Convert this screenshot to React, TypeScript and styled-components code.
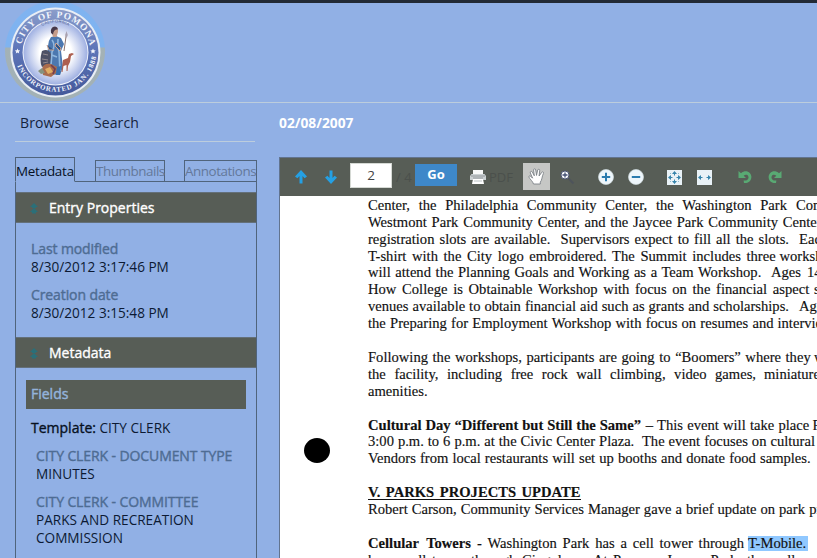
import React from "react";
import styled, { createGlobalStyle } from "styled-components";

const Global = createGlobalStyle`
  * { box-sizing: border-box; }
  html, body { margin: 0; padding: 0; overflow: hidden; background: #91b0e5; }
  body { font-family: "Open Sans", "Noto Sans", sans-serif; font-size: 14px; color: #0c1a33; }
`;

const Page = styled.div`
  width: 817px;
  height: 558px;
  overflow: hidden;
  background: #91b0e5;
`;

const Header = styled.header`
  height: 103px;
  border-top: 3px solid #222a35;
  border-bottom: 1px solid #bccddd;
  padding-left: 4px;
`;

const Columns = styled.div`
  display: flex;
  height: 455px;
`;

const Sidebar = styled.aside`
  width: 242px;
  margin-left: 15px;
  display: flex;
  flex-direction: column;
`;

const Nav = styled.nav`
  display: flex;
  gap: 24px;
  height: 39px;
  padding: 9px 0 0 5px;
  margin-right: 2px;
  line-height: 22px;
  border-bottom: 1px solid #bccddd;
  color: #14233d;
`;

const NavLink = styled.span<{ $w: number }>`
  width: ${(p) => p.$w}px;
  letter-spacing: 0.1px;
  white-space: nowrap;
`;

const Tabs = styled.div`
  display: flex;
  align-items: flex-end;
  height: 25px;
  margin-top: 15px;
`;

const Tab = styled.div<{ $w: number; $active?: boolean }>`
  width: ${(p) => p.$w}px;
  height: ${(p) => (p.$active ? 25 : 22)}px;
  border: 1px solid #50647c;
  border-bottom-color: ${(p) => (p.$active ? "transparent" : "#50647c")};
  color: ${(p) => (p.$active ? "#06101f" : "#64789a")};
  font-size: 13.4px;
  letter-spacing: ${(p) => (p.$active ? -0.22 : -0.44)}px;
  line-height: ${(p) => (p.$active ? 27 : 21)}px;
  white-space: nowrap;
`;

const TabGap = styled.div<{ $w: number }>`
  width: ${(p) => p.$w}px;
  border-bottom: 1px solid #50647c;
`;

const Panel = styled.div`
  flex: 1;
  padding-top: 10px;
  border-left: 1px solid #50647c;
  border-right: 1px solid #50647c;
`;

const SectionBar = styled.div`
  display: flex;
  align-items: center;
  height: 31px;
  padding-left: 12px;
  gap: 9px;
  background: #575d56;
  border-top: 1px solid #64707a;
  border-bottom: 1px solid #64707a;
  color: #fff;
  -webkit-text-stroke: 0.35px #fff;
`;

const Properties = styled.dl`
  height: 114px;
  margin: 0;
  padding: 17px 0 0 15px;
  line-height: 18px;
`;

const Label = styled.dt`
  color: #4e6c93;
  letter-spacing: -0.1px;
  -webkit-text-stroke: 0.4px #4e6c93;
  white-space: nowrap;
`;

const Value = styled.dd`
  margin: 0 0 10px;
  max-width: 190px;
  font-size: 13.6px;
`;

const FieldsBar = styled.div`
  height: 29px;
  margin: 12px 10px 0;
  padding-left: 5px;
  line-height: 28px;
  background: #575d56;
  color: #93b2da;
  -webkit-text-stroke: 0.45px #93b2da;
`;

const Template = styled.div`
  margin: 10px 0 10px 15px;
  line-height: 18px;
  font-size: 13.6px;
  b { font-weight: 400; font-size: 14px; color: #07101e; -webkit-text-stroke: 0.35px #07101e; }
`;

const Fields = styled.dl`
  margin: 0;
  padding-left: 20px;
  line-height: 18px;
`;

const Viewer = styled.main`
  width: 538px;
  margin-left: 22px;
  display: flex;
  flex-direction: column;
`;

const Title = styled.h1`
  height: 54px;
  margin: 0;
  padding-top: 10px;
  color: #fff;
  font-size: 13.8px;
  line-height: 20px;
  font-weight: 700;
`;

const Toolbar = styled.div`
  display: flex;
  align-items: center;
  height: 39px;
  background: #575d56;
  border-top: 1px solid #62748f;
  border-left: 1px solid #62748f;
`;

const Slot = styled.div<{ $ml: number; $w: number }>`
  flex: none;
  width: ${(p) => p.$w}px;
  margin-left: ${(p) => p.$ml}px;
  line-height: 18px;
  white-space: nowrap;
  svg { display: block; }
`;

const Dim = styled(Slot)`
  color: #4b504c;
  font-size: 13px;
`;

const PageInput = styled.div`
  flex: none;
  width: 42px;
  height: 25px;
  margin-left: 13px;
  margin-top: -3px;
  background: #fff;
  border: 1px solid #d5d9d4;
  color: #444;
  text-align: center;
  font-size: 13.5px;
  line-height: 22px;
`;

const GoButton = styled.div`
  flex: none;
  width: 42px;
  height: 22px;
  margin-left: 7px;
  margin-top: -4px;
  background: #3e88c9;
  color: #fff;
  text-align: center;
  font-size: 13px;
  font-weight: 700;
  line-height: 21px;
`;

const HandButton = styled.div`
  flex: none;
  width: 27px;
  height: 27px;
  margin-left: 12px;
  margin-top: -1px;
  padding: 5px;
  background: #c6c7c5;
  svg { display: block; }
`;

const Paper = styled.div`
  flex: 1;
  display: flex;
  overflow: hidden;
  background: #fff;
  border-left: 1px solid #62748f;
`;

const Margin = styled.div`
  flex: none;
  width: 88px;
  padding: 242px 0 0 24px;
`;

const PunchHole = styled.div`
  width: 26px;
  height: 25px;
  border-radius: 50%;
  background: #000;
`;

const Text = styled.div`
  flex: 1;
  min-width: 0;
  padding-top: 0.8px;
  font-family: "Liberation Serif", serif;
  font-size: 14.6px;
  color: #111;
  -webkit-text-stroke: 0.15px #111;
`;

const Line = styled.div`
  height: 16.92px;
  line-height: 17px;
  display: flex;
  white-space: nowrap;
`;

const Run = styled.span<{ $w: number; $gap: number; $bold?: boolean; $mark?: boolean; $under?: boolean }>`
  flex: none;
  width: ${(p) => p.$w}px;
  margin-left: ${(p) => p.$gap}px;
  word-spacing: -1.5px;
  text-align: justify;
  text-align-last: justify;
  font-weight: ${(p) => (p.$bold ? 700 : 400)};
  height: ${(p) => (p.$under ? "16px" : p.$mark ? "15px" : "auto")};
  margin-top: ${(p) => (p.$mark ? "1px" : "0")};
  line-height: ${(p) => (p.$mark ? "15px" : "17px")};
  background: ${(p) => (p.$mark ? "#90c8ff" : "transparent")};
  border-bottom: ${(p) => (p.$under ? "1px solid #111" : "none")};
`;

type R = { t: string; from: number; to: number; bold?: boolean; mark?: boolean; under?: boolean };
const left = 368;
const r = (t: string, from: number, to: number, extra: Partial<R> = {}): R => ({ t, from, to, ...extra });

const lines: R[][] = [
  [r("Center, the Philadelphia Community Center, the Washington Park", 368, 787), r("Community", 796, 870)],
  [r("Westmont Park Community Center, and the Jaycee Park Community", 368, 778), r("Center.", 782.7, 826)],
  [r("registration slots are available.\u00a0 Supervisors expect to fill all the slots.", 368, 789), r("Each", 799, 830)],
  [r("T-shirt with the City logo embroidered. The Summit includes three", 368, 775.7), r("workshops", 779.5, 845)],
  [r("will attend the Planning Goals and Working as a Team Workshop.", 368, 761.3), r("Ages 14", 771, 821.5)],
  [r("How College is Obtainable Workshop with focus on the financial aspect", 368, 809.3), r("such", 814, 842)],
  [r("venues available to obtain financial aid such as grants and scholarships.", 368, 789), r("Ages", 799, 830)],
  [r("the Preparing for Employment Workshop with focus on resumes and", 368, 773.5), r("interviews", 777.5, 840)],
  [],
  [r("Following the workshops, participants are going to “Boomers” where they", 368, 810.7), r("will", 814, 840)],
  [r("the facility, including free rock wall climbing, video games,", 368, 756), r("miniature", 764, 820)],
  [r("amenities.", 368, 427)],
  [],
  [r("Cultural Day “Different but Still the Same”", 368, 641, { bold: true }), r("– This event will take place", 645.7, 809.3), r("Friday", 812.5, 850)],
  [r("3:00 p.m. to 6 p.m. at the Civic Center Plaza.\u00a0 The event focuses on cultural", 368, 815)],
  [r("Vendors from local restaurants will set up booths and donate food samples.", 368, 810.7)],
  [],
  [r("V. PARKS PROJECTS UPDATE", 368, 580.5, { bold: true, under: true })],
  [r("Robert Carson, Community Services Manager gave a brief update on park", 368, 805), r("projects", 809.3, 860)],
  [],
  [r("Cellular Towers", 368, 471, { bold: true }), r("- Washington Park has a cell tower through", 477, 744), r("T-Mobile.", 748, 807.5, { mark: true })],
  [r("has a cell tower through Cingular.", 368, 576), r("At Pomona Jaycee Park,", 593, 741), r("the cell area", 747, 829)],
];

const Seal = () => (
  <svg width="104" height="99" viewBox="4 3 104 99">
    <defs>
      <radialGradient id="glow" cx="0.5" cy="0.5" r="0.5">
        <stop offset="0.5" stopColor="#fff" />
        <stop offset="1" stopColor="#9fb0e2" />
      </radialGradient>
      <linearGradient id="halo" x1="0" y1="0" x2="0" y2="1">
        <stop offset="0.46" stopColor="#79b4f4" />
        <stop offset="0.47" stopColor="#a9b2a6" />
      </linearGradient>
      <linearGradient id="ring" x1="0" y1="0" x2="0" y2="1">
        <stop offset="0" stopColor="#8b9dca" />
        <stop offset="0.45" stopColor="#5e76b9" />
        <stop offset="1" stopColor="#44599b" />
      </linearGradient>
      <path id="arcTop" d="M20.500 52.500a35 35 0 0 1 70 0" />
      <path id="arcBottom" d="M15 57a41 41 0 0 0 81 0" />
      <path id="arcState" d="M41 26.500q14.500-8 29 0" />
    </defs>
    <circle cx="55" cy="51" r="50" fill="url(#halo)" opacity=".75" />
    <circle cx="55.5" cy="52.5" r="45" fill="#e9eef5" />
    <circle cx="55.5" cy="52.5" r="43" fill="url(#ring)" />
    <circle cx="55.5" cy="52.5" r="33" fill="#edf1fa" />
    <circle cx="55.5" cy="52.5" r="32" fill="url(#glow)" />
    <g fill="#f2f5fc" fontFamily="Liberation Serif, serif" fontWeight="700">
      <text fontSize="9.4"><textPath href="#arcTop" startOffset="8" textLength="95">CITY OF POMONA</textPath></text>
      <text fontSize="7"><textPath href="#arcBottom" startOffset="9" textLength="107">INCORPORATED JAN. 1888</textPath></text>
      <path d="m17.500 48.500.8 1.700 1.900.2-1.400 1.300.4 1.900-1.700-1-1.700 1 .4-1.900-1.400-1.300 1.900-.2zM93 48.500l.8 1.700 1.900.2-1.400 1.300.4 1.900-1.700-1-1.700 1 .4-1.900-1.400-1.300 1.900-.2z" />
    </g>
    <text fill="#53648f" fontSize="4" fontFamily="Liberation Sans, sans-serif"><textPath href="#arcState" startOffset="1" textLength="28">CALIFORNIA</textPath></text>
    <path d="M66.500 33 64 51" stroke="#8d7470" strokeWidth="1" />
    <path d="M65.300 35l1.200-4 1.300 4-1.100 3z" fill="#a9a1b0" />
    <path d="M51 37q-3 4-3 9l-1 15 1 13 12 1 3-8-2-16 3-7-3-6-5-2z" fill="#4c78b0" />
    <path d="M52 40q4 5 0 12l-1 13M58 39q-1 7 1 13l1 19M49 54l8 3" stroke="#90b7de" strokeWidth="1.600" fill="none" />
    <path d="M56 43l5 5-1 3-5-5zM47 45l2 5 5 0" stroke="#cda18d" strokeWidth="1" fill="#315789" />
    <path d="M51.500 31q0-4 3.500-4t3 5l-1.500 5h-3.500z" fill="#c59c8a" />
    <path d="M51 33q-1-6 4-6.500 3 .5 2.700 3-4-.5-4.700 5z" fill="#46384a" />
    <path d="M42 51q6-3 9 3l-1 10-8 3q-3-6 0-16z" fill="#4d5065" />
    <path d="M43 54l5 1M42 59l6 1M43 63l5-1" stroke="#938b91" />
    <path d="M42 69q1-6 9-5l6 3-1 6-5 4-8-2z" fill="#aa6c4c" />
    <path d="M45 69l5-2 3 5-5 2z" fill="#e0ad64" />
    <path d="M51 65l4 4-2 5" stroke="#743e4e" strokeWidth="1.700" fill="none" />
    <path d="M38 71l4-3 3 5-4 1z" fill="#85927d" />
    <path d="M63 60l5-2 1-4 3-1 2 1-3 2-1 6-2 4-.5 5h-1l0-6-3 1-1 6h-1z" fill="#ad5f50" />
    <path d="M57 67l4-1-1 9-4 0z" fill="#3770ae" />
  </svg>
);

const Collapse = () => (
  <svg width="12" height="14" viewBox="0 0 12 14" fill="#2b6f78">
    <path d="m6 2 4 4H8v1H4V6H2zM6 7l4 4H8v1.500H4V11H2z" />
  </svg>
);

const Arrow = ({ down = false }: { down?: boolean }) => (
  <svg width="12" height="14" viewBox="0 0 12 14">
    <path d="M6 0 12 6.500 9.600 8.300 7.500 6v7.500h-3V6L2.400 8.300 0 6.500z" fill="#24a0e4" transform={down ? "rotate(180 6 7)" : undefined} />
  </svg>
);

const Printer = () => (
  <svg width="16" height="14" viewBox="0 0 16 14">
    <path d="M3 0h10v4H3z" fill="#f8f9f9" />
    <path d="M1.500 4h13L16 6v4H0V6z" fill="#cbd1d3" />
    <path d="M1 6h14M3 8h10" stroke="#858c8f" strokeWidth=".8" />
    <path d="M3 9h10l1 5H2z" fill="#fff" />
    <path d="M4 11h8" stroke="#bcc3c5" />
  </svg>
);

const Hand = () => (
  <svg width="17" height="17" viewBox="0 0 17 17">
    <path d="M5.500 16C5 13.500 1.600 11 .8 8.900c0-1.200 1.500-1.200 2.300-.2l1.500 1.500L2.300 4.800c-.4-1.500 1.400-2.100 2-.8l2 3.800L5.600 2c0-1.500 1.900-1.600 2.100-.1l.8 5.500L9.700 2c.5-1.300 2.200-.9 2 .5l-.6 5.500 2.600-3.600c.9-1.200 2.300-.2 1.700 1-1.500 3-1.300 6.800-3.100 8.700V16z" fill="#fff" stroke="#767c82" strokeWidth=".85" strokeLinejoin="round" />
  </svg>
);

const Magnifier = () => (
  <svg width="15" height="15" viewBox="0 0 15 15">
    <path d="m8 8 5.500 5.500" stroke="#4e545b" strokeWidth="2" />
    <circle cx="5" cy="5" r="4" fill="#f7f9fc" stroke="#4d5675" />
    <path d="M5 2.500v5M2.500 5h5" stroke="#424e72" strokeWidth="1.300" />
  </svg>
);

const Zoom = ({ plus = false }: { plus?: boolean }) => (
  <svg width="16" height="16" viewBox="0 0 16 16">
    <circle cx="8" cy="8" r="7.500" fill="#eef6fb" stroke="#d1dce0" strokeWidth=".7" />
    <path d={plus ? "M8 3.800v8.400M3.800 8h8.400" : "M3.800 8h8.400"} stroke="#2b7caf" strokeWidth="2" />
  </svg>
);

const Fit = ({ all = false }: { all?: boolean }) => (
  <svg width="15" height="15" viewBox="0 0 15 15">
    <path d="M0 0h15v15H0z" fill="#e9f2f7" />
    <path d="m1 7.500 3-2.500v5zM14 7.500l-3-2.500v5zM4 7h1.500v1H4zM9.500 7H11v1H9.500z" fill="#3684ab" />
    {all && <path d="M7.500 1 5 4h5zM7.500 14 5 11h5zM7 4h1v1.500H7zM7 9.500h1V11H7z" fill="#3684ab" />}
    {all && <path d="M3 3h1v1H3zM11 3h1v1h-1zM3 11h1v1H3zM11 11h1v1h-1z" fill="#8fb9cf" />}
  </svg>
);

const Rotate = ({ right = false }: { right?: boolean }) => (
  <svg width="14" height="14" viewBox="0 0 14 14">
    <g transform={right ? "translate(14 0) scale(-1 1)" : undefined}>
      <path d="M.5 1 3 3.200C6 .8 9.500.8 11.800 3c2.400 2.500 2 6.500-.6 8.700-1.500 1.200-3.200 1.600-5.200 1.300l-.4-2.500c2.200.3 3.900-.3 4.600-1.800.8-1.700 0-3.500-1.600-3.900-1-.2-2 .1-2.900.9L8 8H.5z" fill="#59a973" />
    </g>
  </svg>
);

export default function App() {
  return (
    <Page>
      <Global />
      <Header><Seal /></Header>
      <Columns>
        <Sidebar>
          <Nav><NavLink $w={50}>Browse</NavLink><NavLink $w={46}>Search</NavLink></Nav>
          <Tabs>
            <Tab $w={60} $active>Metadata</Tab>
            <TabGap $w={20} />
            <Tab $w={70}>Thumbnails</Tab>
            <TabGap $w={19} />
            <Tab $w={73}>Annotations</Tab>
          </Tabs>
          <Panel>
            <SectionBar><Collapse />Entry Properties</SectionBar>
            <Properties>
              <Label>Last modified</Label><Value>8/30/2012 3:17:46 PM</Value>
              <Label>Creation date</Label><Value>8/30/2012 3:15:48 PM</Value>
            </Properties>
            <SectionBar><Collapse />Metadata</SectionBar>
            <FieldsBar>Fields</FieldsBar>
            <Template><b>Template:</b> CITY CLERK</Template>
            <Fields>
              <Label>CITY CLERK - DOCUMENT TYPE</Label><Value>MINUTES</Value>
              <Label>CITY CLERK - COMMITTEE</Label><Value>PARKS AND RECREATION COMMISSION</Value>
            </Fields>
          </Panel>
        </Sidebar>
        <Viewer>
          <Title>02/08/2007</Title>
          <Toolbar>
            <Slot $ml={15} $w={12}><Arrow /></Slot>
            <Slot $ml={18} $w={12}><Arrow down /></Slot>
            <PageInput>2</PageInput>
            <Dim $ml={4} $w={12}>/ 4</Dim>
            <GoButton>Go</GoButton>
            <Slot $ml={13} $w={16}><Printer /></Slot>
            <Dim $ml={3} $w={22}>PDF</Dim>
            <HandButton><Hand /></HandButton>
            <Slot $ml={10} $w={15}><Magnifier /></Slot>
            <Slot $ml={23} $w={16}><Zoom plus /></Slot>
            <Slot $ml={14} $w={16}><Zoom /></Slot>
            <Slot $ml={23} $w={15}><Fit all /></Slot>
            <Slot $ml={15} $w={15}><Fit /></Slot>
            <Slot $ml={26} $w={14}><Rotate /></Slot>
            <Slot $ml={16} $w={14}><Rotate right /></Slot>
          </Toolbar>
          <Paper>
            <Margin><PunchHole /></Margin>
            <Text>
              {lines.map((line, i) => (
                <Line key={i}>
                  {line.map((run, j) => (
                    <Run
                      key={j}
                      $w={run.to - run.from}
                      $gap={run.from - (j ? line[j - 1].to : left)}
                      $bold={run.bold}
                      $mark={run.mark}
                      $under={run.under}
                    >
                      {run.t}
                    </Run>
                  ))}
                </Line>
              ))}
            </Text>
          </Paper>
        </Viewer>
      </Columns>
    </Page>
  );
}
